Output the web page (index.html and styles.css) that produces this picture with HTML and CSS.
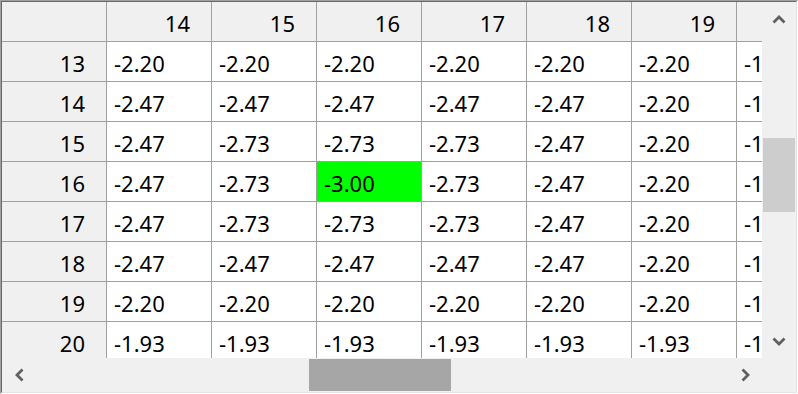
FILE: index.html
```html
<!DOCTYPE html>
<html>
<head>
<meta charset="utf-8">
<link rel="stylesheet" href="styles.css">
</head>
<body>
<div class="frame">
  <div class="inner">
    <div class="main">
      <div class="viewport">
        <div class="grid">
          <div class="cell hdr corner"></div>
          <div class="cell hdr">14</div>
          <div class="cell hdr">15</div>
          <div class="cell hdr">16</div>
          <div class="cell hdr">17</div>
          <div class="cell hdr">18</div>
          <div class="cell hdr">19</div>
          <div class="cell hdr">20</div>

          <div class="cell rh">13</div>
          <div class="cell">-2.20</div><div class="cell">-2.20</div><div class="cell">-2.20</div><div class="cell">-2.20</div><div class="cell">-2.20</div><div class="cell">-2.20</div><div class="cell">-1.93</div>

          <div class="cell rh">14</div>
          <div class="cell">-2.47</div><div class="cell">-2.47</div><div class="cell">-2.47</div><div class="cell">-2.47</div><div class="cell">-2.47</div><div class="cell">-2.20</div><div class="cell">-1.93</div>

          <div class="cell rh">15</div>
          <div class="cell">-2.47</div><div class="cell">-2.73</div><div class="cell">-2.73</div><div class="cell">-2.73</div><div class="cell">-2.47</div><div class="cell">-2.20</div><div class="cell">-1.93</div>

          <div class="cell rh">16</div>
          <div class="cell">-2.47</div><div class="cell">-2.73</div><div class="cell sel">-3.00</div><div class="cell">-2.73</div><div class="cell">-2.47</div><div class="cell">-2.20</div><div class="cell">-1.93</div>

          <div class="cell rh">17</div>
          <div class="cell">-2.47</div><div class="cell">-2.73</div><div class="cell">-2.73</div><div class="cell">-2.73</div><div class="cell">-2.47</div><div class="cell">-2.20</div><div class="cell">-1.93</div>

          <div class="cell rh">18</div>
          <div class="cell">-2.47</div><div class="cell">-2.47</div><div class="cell">-2.47</div><div class="cell">-2.47</div><div class="cell">-2.47</div><div class="cell">-2.20</div><div class="cell">-1.93</div>

          <div class="cell rh">19</div>
          <div class="cell">-2.20</div><div class="cell">-2.20</div><div class="cell">-2.20</div><div class="cell">-2.20</div><div class="cell">-2.20</div><div class="cell">-2.20</div><div class="cell">-1.93</div>

          <div class="cell rh">20</div>
          <div class="cell">-1.93</div><div class="cell">-1.93</div><div class="cell">-1.93</div><div class="cell">-1.93</div><div class="cell">-1.93</div><div class="cell">-1.93</div><div class="cell">-1.67</div>
        </div>
      </div>
      <div class="vscroll">
        <div class="sbtn"><svg width="14" height="9" viewBox="0 0 14 9"><path d="M1.5 7.5 L7 2 L12.5 7.5" fill="none" stroke="#606060" stroke-width="2.8"/></svg></div>
        <div class="vtrack"><div class="vthumb"></div></div>
        <div class="sbtn"><svg width="14" height="9" viewBox="0 0 14 9"><path d="M1.5 1.5 L7 7 L12.5 1.5" fill="none" stroke="#606060" stroke-width="2.8"/></svg></div>
      </div>
    </div>
    <div class="bottom">
      <div class="hscroll">
        <div class="sbtn"><svg width="9" height="14" viewBox="0 0 9 14"><path d="M7.5 1.5 L2 7 L7.5 12.5" fill="none" stroke="#606060" stroke-width="2.8"/></svg></div>
        <div class="htrack"><div class="hthumb"></div></div>
        <div class="sbtn"><svg width="9" height="14" viewBox="0 0 9 14"><path d="M1.5 1.5 L7 7 L1.5 12.5" fill="none" stroke="#606060" stroke-width="2.8"/></svg></div>
      </div>
      <div class="sizer"></div>
    </div>
  </div>
</div>
</body>
</html>
```

FILE: styles.css
```css
html, body {
  margin: 0;
  padding: 0;
  background: #ffffff;
}

.frame {
  width: 798px;
  height: 394px;
  box-sizing: border-box;
  border-top: 1px solid #a0a0a0;
  border-left: 1px solid #a0a0a0;
  border-right: 1px solid #ffffff;
  border-bottom: 1px solid #ffffff;
}

.inner {
  width: 100%;
  height: 100%;
  box-sizing: border-box;
  border-top: 1px solid #696969;
  border-left: 1px solid #696969;
  border-right: 1px solid #e3e3e3;
  border-bottom: 1px solid #e3e3e3;
  display: flex;
  flex-direction: column;
  background: #f0f0f0;
}

.main {
  display: flex;
  height: 356px;
}

.viewport {
  width: 760px;
  height: 356px;
  overflow: hidden;
  background: #ffffff;
}

.grid {
  display: grid;
  grid-template-columns: repeat(8, 105px);
  grid-auto-rows: 40px;
  font-family: "Noto Sans", "Open Sans", sans-serif;
  font-size: 22px;
  color: #000000;
}

.cell {
  box-sizing: border-box;
  border-right: 1px solid #a0a0a0;
  border-bottom: 1px solid #a0a0a0;
  display: flex;
  align-items: center;
  padding: 3px 0 0 7px;
  white-space: nowrap;
  overflow: hidden;
}

.hdr, .rh {
  background: #f0f0f0;
  justify-content: flex-end;
  padding: 3px 21px 0 0;
}

.sel {
  background: #00ff00;
}

.vscroll {
  width: 34px;
  display: flex;
  flex-direction: column;
  background: #f0f0f0;
}

.sbtn {
  width: 34px;
  height: 34px;
  display: flex;
  align-items: center;
  justify-content: center;
  flex: none;
}

.vtrack {
  flex: 1;
  padding: 102px 1px 0 1px;
}

.vthumb {
  height: 74px;
  background: #cdcdcd;
}

.bottom {
  display: flex;
  height: 34px;
}

.hscroll {
  width: 760px;
  display: flex;
  background: #f0f0f0;
}

.htrack {
  flex: 1;
  padding: 1px 0 1px 273px;
}

.hthumb {
  width: 142px;
  height: 32px;
  background: #a6a6a6;
}

.sizer {
  width: 34px;
  background: #f0f0f0;
}
```
